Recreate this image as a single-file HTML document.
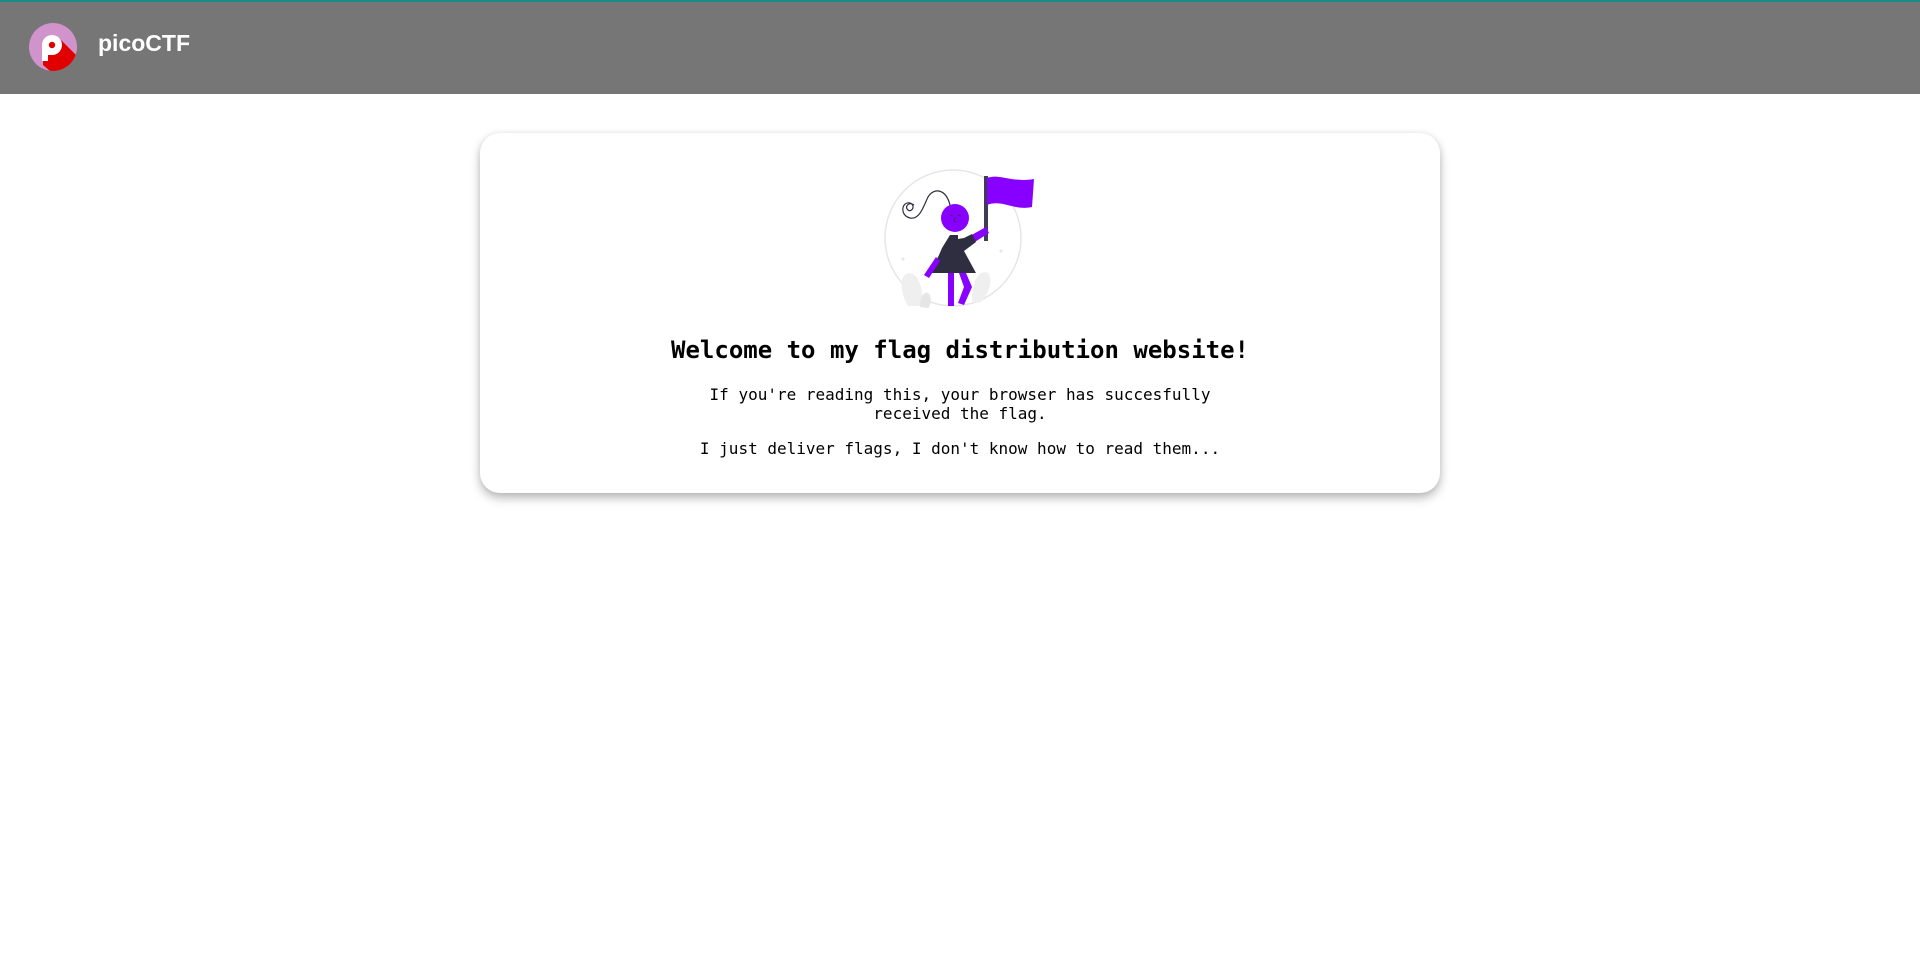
<!DOCTYPE html>
<html><head><meta charset="utf-8"><style>
html,body{margin:0;padding:0;background:#fff;width:1920px;height:962px;overflow:hidden}
.hdr{position:absolute;left:0;top:0;width:1920px;height:94px;background:#767676;border-top:2px solid #1a8a8a;box-sizing:border-box}
.logo{position:absolute;left:29px;top:21px}
.brand{position:absolute;left:98px;top:28px;color:#fff;font-family:"Liberation Sans",sans-serif;font-size:23px;font-weight:bold}
.card{position:absolute;left:480px;top:133px;width:960px;height:360px;background:#fff;border-radius:20px;box-shadow:0 5px 10px rgba(0,0,0,0.28),0 0 6px rgba(0,0,0,0.06)}
.ill{position:absolute;left:404px;top:36px}
h1{position:absolute;left:0;top:334px;width:1920px;margin:0;text-align:center;font-family:"DejaVu Sans Mono","Liberation Mono",monospace;font-size:24px;font-weight:bold;color:#000;line-height:32px}
.p{position:absolute;left:0;width:1920px;text-align:center;font-family:"DejaVu Sans Mono","Liberation Mono",monospace;font-size:16px;color:#000;line-height:19px}
</style></head><body>
<div class="hdr">
<svg class="logo" width="50" height="50" viewBox="0 0 50 50">
<defs><clipPath id="c"><circle cx="24" cy="24" r="24"/></clipPath></defs>
<circle cx="24" cy="24" r="24" fill="#d093cb"/>
<g clip-path="url(#c)">
<path d="M14 36 L30 15 L60 45 L35 60 L14 42 Z" fill="#e00000"/>
</g>
<path d="M13 38 L13 22 A10 10 0 1 1 23 32 L19 32 L19 38 Z" fill="#fff"/>
<circle cx="23" cy="22" r="3.2" fill="#e00000"/>
</svg>
<div class="brand">picoCTF</div>
</div>
<div class="card">
<svg class="ill" width="160" height="145" viewBox="0 0 160 145">
<circle cx="69" cy="69" r="68" fill="none" stroke="#e6e6e6" stroke-width="1.5"/>
<path d="M24 137 C14 120 16 104 26 104 C36 106 40 124 38 137 Z" fill="#efefef"/>
<path d="M36 138 C36 126 42 120 46 126 C48 132 46 137 44 139 Z" fill="#e6e6e6"/>
<path d="M88 132 C88 110 96 100 104 104 C110 112 104 126 96 134 Z" fill="#efefef"/>
<circle cx="19" cy="90" r="1.5" fill="#e6e6e6"/><circle cx="117" cy="82" r="1.5" fill="#e6e6e6"/>
<path d="M30 36 C25 32 20 38 24 41 C28 44 32 36 26 34 C18 32 15 46 26 49 C36 51 40 36 44 28 C50 18 62 20 66 36" fill="none" stroke="#2f2e41" stroke-width="1.2"/>
<circle cx="71" cy="49" r="14" fill="#8800ff"/>
<path d="M66 46 l3 1 M74 46 l3 1 M71 48 l-1 4 l2 1" stroke="#2f2e41" stroke-width="0.7" fill="none"/>
<rect x="100" y="7" width="4" height="65" fill="#3f3d56"/>
<path d="M103 9 C115 4 128 14 150 10 L148 38 C130 42 118 30 103 36 Z" fill="#8800ff"/>
<path d="M84 68 L102 58 L105 64 L86 76 Z" fill="#8800ff"/>
<path d="M66 66 L74 66 L74 70 L80 69 L88 65 L92 73 L80 82 L92 104 L46 104 L55 86 L58 79 Z" fill="#2f2e41"/>
<path d="M40 106 L52 88 L56 92 L45 109 Z" fill="#8800ff"/>
<rect x="64" y="104" width="6" height="33" fill="#8800ff"/>
<path d="M75 104 L82 104 L88 118 L80 136 L74 134 L80 118 Z" fill="#8800ff"/>
</svg>
</div>
<h1>Welcome to my flag distribution website!</h1>
<div class="p" style="top:385px">If you're reading this, your browser has succesfully<br>received the flag.</div>
<div class="p" style="top:439px">I just deliver flags, I don't know how to read them...</div>
</body></html>
